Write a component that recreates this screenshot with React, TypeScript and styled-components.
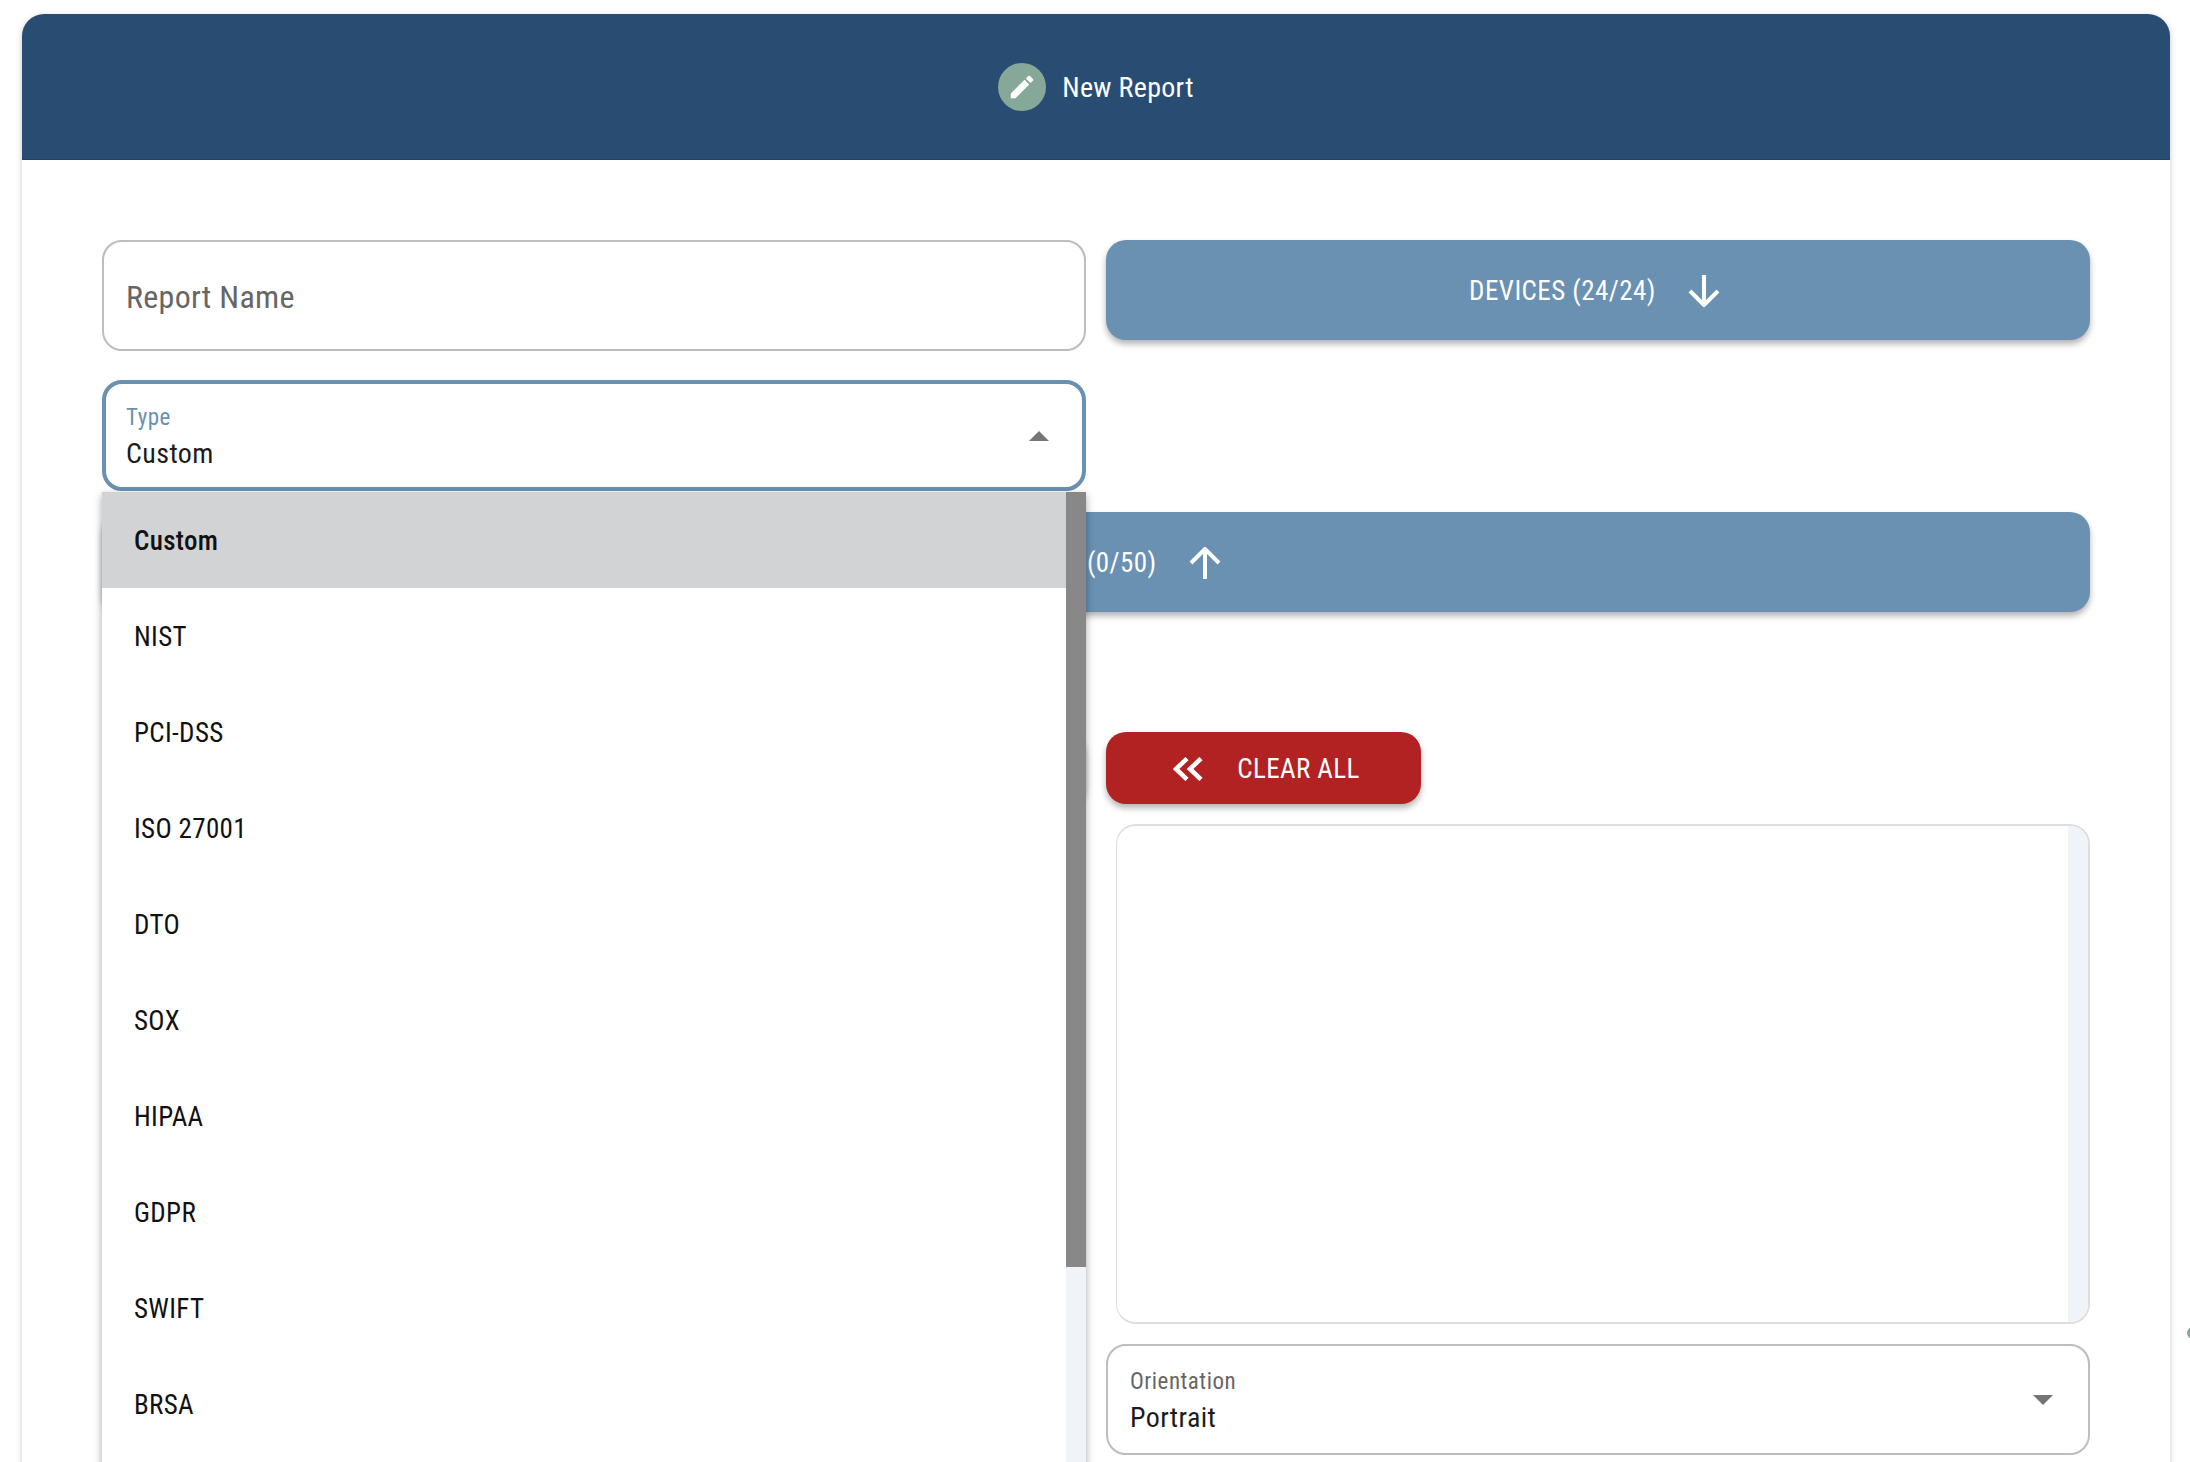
import { FC } from 'react';
import styled, { createGlobalStyle } from 'styled-components';

const GlobalStyle = createGlobalStyle`
  html, body {
    background: #fff;
    margin: 0;
    padding: 0;
  }

  body {
    font-family: Roboto, "Liberation Sans", sans-serif;
    font-stretch: 85%;
  }
`;

const Page = styled.div`
  box-sizing: border-box;
  height: 1462px;
  overflow: hidden;
  padding: 14px 20px 0 22px;
  position: relative;
  width: 2190px;
`;

const Card = styled.div`
  background: #fff;
  border-radius: 22px 22px 0 0;
  box-shadow: 0 2px 6px rgba(0, 0, 0, 0.22);
  min-height: 1500px;
`;

const Header = styled.header`
  align-items: center;
  background: #294d72;
  border-bottom: 1px solid #234363;
  border-radius: 22px 22px 0 0;
  box-sizing: border-box;
  color: #fff;
  display: flex;
  font-size: 28px;
  gap: 16px;
  height: 146px;
  justify-content: center;
  letter-spacing: 0.3px;
  padding-top: 1px;
`;

const HeaderIcon = styled.span`
  align-items: center;
  background: #85a899;
  border-radius: 50%;
  display: flex;
  height: 48px;
  justify-content: center;
  margin-top: -1px;
  width: 48px;
`;

const Body = styled.div`
  column-gap: 20px;
  display: grid;
  grid-template-columns: 984px 984px;
  padding: 80px;
`;

const Column = styled.div<{ $top?: number }>`
  display: flex;
  flex-direction: column;
  margin-top: ${({ $top = 0 }) => $top}px;
  position: relative;
`;

const Field = styled.div<{ $focused?: boolean }>`
  align-items: center;
  background: #fff;
  border: ${({ $focused }) => ($focused ? '4px solid #6a91b2' : '2px solid #bdbdbd')};
  border-radius: 20px;
  box-sizing: border-box;
  display: flex;
  height: 111px;
  justify-content: space-between;
  padding: 0 ${({ $focused }) => ($focused ? '33px' : '35px')} 0 ${({ $focused }) => ($focused ? '20px' : '22px')};
`;

const Placeholder = styled.span`
  color: #666;
  font-size: 32px;
  letter-spacing: 0.3px;
  padding-top: 2px;
`;

const FieldText = styled.div`
  display: flex;
  flex-direction: column;
  gap: 7px;
  padding-top: 3px;
`;

const FieldLabel = styled.span<{ $focused?: boolean }>`
  color: ${({ $focused }) => ($focused ? '#6a91b2' : '#666')};
  font-size: 23px;
  letter-spacing: 0.5px;
  line-height: 26px;
`;

const FieldValue = styled.span`
  color: #1c1c1c;
  font-size: 28px;
  letter-spacing: 0.4px;
  line-height: 32px;
`;

const WideButton = styled.button<{ $full?: boolean }>`
  align-items: center;
  background: #6a91b2;
  border: 0;
  border-radius: 20px;
  box-shadow: 0 4px 6px rgba(0, 0, 0, 0.3);
  color: #fff;
  display: flex;
  font-family: inherit;
  font-stretch: inherit;
  font-size: 27px;
  gap: 32px;
  height: 100px;
  justify-content: center;
  letter-spacing: 0.45px;
  padding: 2px ${({ $full }) => ($full ? '14px' : '7px')} 0 0;
  width: 100%;
`;

const FullRow = styled.div`
  grid-column: 1 / span 2;
  margin-top: 21px;
`;

const ClearButton = styled.button`
  align-items: center;
  align-self: flex-start;
  background: #b22222;
  border: 0;
  border-radius: 20px;
  box-shadow: 0 4px 6px rgba(0, 0, 0, 0.3);
  color: #fff;
  display: flex;
  font-family: inherit;
  font-stretch: inherit;
  font-size: 27px;
  gap: 34px;
  height: 72px;
  justify-content: center;
  letter-spacing: 0.4px;
  padding: 2px 0 0 6px;
  width: 315px;
`;

const AddButton = styled(ClearButton)`
  background: #6a91b2;
  margin-left: 12px;
  width: 972px;
`;

const ListBox = styled.div`
  border: 2px solid #dedede;
  border-left-width: 1px;
  border-radius: 20px;
  box-sizing: border-box;
  display: flex;
  height: 500px;
  justify-content: flex-end;
  margin: 20px 0 20px 10px;
  overflow: hidden;
`;

const ListBoxTrack = styled.div`
  background: #f0f4f9;
  width: 20px;
`;

const Menu = styled.div`
  background: #fff;
  box-shadow: 0 3px 8px rgba(0, 0, 0, 0.35);
  display: flex;
  height: 1000px;
  left: 0;
  margin-top: 1px;
  position: absolute;
  right: 0;
  top: 100%;
  z-index: 10;
`;

const MenuList = styled.ul`
  flex: 1;
  list-style: none;
  margin: 0;
  padding: 0;
`;

const MenuItem = styled.li<{ $selected?: boolean }>`
  align-items: center;
  background: ${({ $selected }) => ($selected ? '#d2d3d5' : 'transparent')};
  box-sizing: border-box;
  color: #111;
  display: flex;
  font-size: 27px;
  font-weight: ${({ $selected }) => ($selected ? 500 : 400)};
  height: 96px;
  letter-spacing: 0.35px;
  padding: 2px 0 0 32px;
`;

const MenuTrack = styled.div`
  background: #f0f4f9;
  width: 20px;
`;

const MenuThumb = styled.div`
  background: #888;
  height: 775px;
`;

const EdgeDot = styled.span`
  background: #85a899;
  border-radius: 50%;
  height: 12px;
  left: 2187px;
  position: absolute;
  top: 1327px;
  width: 12px;
`;

const Triangle: FC<{ up?: boolean }> = ({ up }) => (
  <svg width="20" height="10" viewBox="0 0 20 10" fill="#757575">
    <path d={up ? 'M0 10 L10 0 L20 10 Z' : 'M0 0 L20 0 L10 10 Z'} />
  </svg>
);

const Arrow: FC<{ up?: boolean }> = ({ up }) => (
  <svg
    width="32"
    height="32"
    viewBox="0 0 32 32"
    fill="none"
    stroke="#fff"
    strokeWidth="4"
    style={up ? { transform: 'rotate(180deg)' } : undefined}
  >
    <path d="M16 0v29M2 16l14 14 14-14" />
  </svg>
);

const TYPES = ['Custom', 'NIST', 'PCI-DSS', 'ISO 27001', 'DTO', 'SOX', 'HIPAA', 'GDPR', 'SWIFT', 'BRSA'];

const App: FC = () => (
  <>
    <GlobalStyle />
    <Page>
      <Card>
        <Header>
          <HeaderIcon>
            <svg width="30" height="30" viewBox="0 0 24 24" fill="#fff">
              <path d="M3 17.25V21h3.75L17.81 9.94l-3.75-3.75L3 17.25zM20.71 7.04c.39-.39.39-1.02 0-1.41l-2.34-2.34a.9959.9959 0 0 0-1.41 0l-1.83 1.83 3.75 3.75 1.83-1.83z" />
            </svg>
          </HeaderIcon>
          New Report
        </Header>
        <Body>
          <Column>
            <Field>
              <Placeholder>Report Name</Placeholder>
            </Field>
            <Column $top={29}>
              <Field $focused>
                <FieldText>
                  <FieldLabel $focused>Type</FieldLabel>
                  <FieldValue>Custom</FieldValue>
                </FieldText>
                <Triangle up />
              </Field>
              <Menu>
                <MenuList>
                  {TYPES.map((type, index) => (
                    <MenuItem key={type} $selected={index === 0}>
                      {type}
                    </MenuItem>
                  ))}
                </MenuList>
                <MenuTrack>
                  <MenuThumb />
                </MenuTrack>
              </Menu>
            </Column>
          </Column>
          <Column>
            <WideButton>
              DEVICES (24/24)
              <Arrow />
            </WideButton>
          </Column>
          <FullRow>
            <WideButton $full>
              CONTROLS (0/50)
              <Arrow up />
            </WideButton>
          </FullRow>
          <Column $top={120}>
            <AddButton>ADD ALL</AddButton>
          </Column>
          <Column $top={120}>
            <ClearButton>
              <svg width="30" height="24" viewBox="0 0 30 24" fill="none" stroke="#fff" strokeWidth="4.5">
                <path d="M14 1.5L3 12l11 10.5M28 1.5L17 12l11 10.5" />
              </svg>
              CLEAR ALL
            </ClearButton>
            <ListBox>
              <ListBoxTrack />
            </ListBox>
            <Field>
              <FieldText>
                <FieldLabel>Orientation</FieldLabel>
                <FieldValue>Portrait</FieldValue>
              </FieldText>
              <Triangle />
            </Field>
          </Column>
        </Body>
      </Card>
      <EdgeDot />
    </Page>
  </>
);

export default App;
